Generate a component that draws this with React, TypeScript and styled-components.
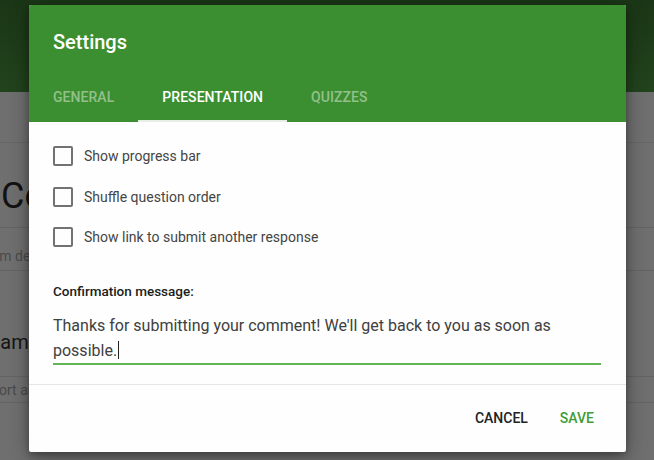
import React from "react";
import styled, { createGlobalStyle } from "styled-components";

const GlobalStyle = createGlobalStyle`
  html, body {
    margin: 0;
    padding: 0;
    width: 654px;
    height: 460px;
    overflow: hidden;
    font-family: Roboto, "Liberation Sans", Arial, sans-serif;
  }
`;

const Page = styled.div`
  position: relative;
  width: 654px;
  height: 460px;
  background: #6f6f6f;
  overflow: hidden;
`;

const TopBand = styled.div`
  height: 92px;
  background: linear-gradient(180deg, #1b3616 0%, #22431d 100%);
`;

const FormColumn = styled.div`
  margin-top: 50px;
  display: flex;
  flex-direction: column;
  border-top: 1px solid #666;
`;

const FormRow = styled.div<{ $h: number; $line?: boolean }>`
  height: ${(p) => p.$h}px;
  display: flex;
  align-items: center;
  border-bottom: ${(p) => (p.$line ? "1px solid #646464" : "none")};
  white-space: nowrap;
`;

const FormTitle = styled.span`
  font-size: 36px;
  color: #121212;
  margin: 22px 0 0 1px;
`;

const FormHint = styled.span<{ $shift: number; $top?: number }>`
  font-size: 14px;
  color: #4a4a4a;
  margin-left: ${(p) => p.$shift}px;
  margin-top: ${(p) => p.$top ?? 0}px;
`;

const QuestionTitle = styled.span`
  font-size: 20px;
  color: #141414;
  margin: 36px 0 0 -14px;
`;

/* dialog */

const Dialog = styled.div`
  position: absolute;
  left: 29px;
  top: 5px;
  width: 597px;
  height: 447px;
  background: #fdfefd;
  border-radius: 2px;
  box-shadow: 0 6px 20px rgba(0, 0, 0, 0.35), 0 2px 6px rgba(0, 0, 0, 0.25);
  display: flex;
  flex-direction: column;
  overflow: hidden;
`;

const Header = styled.div`
  background: #3c8f30;
  height: 117px;
  display: flex;
  flex-direction: column;
`;

const Title = styled.h2`
  margin: 0;
  padding: 25px 24px 0;
  font-size: 20px;
  font-weight: 500;
  color: #ffffff;
`;

const Tabs = styled.div`
  display: flex;
  height: 39px;
  margin-top: auto;
`;

const Tab = styled.div<{ $active?: boolean }>`
  padding: 0 24px 9px;
  display: flex;
  align-items: center;
  font-size: 14px;
  font-weight: 500;
  letter-spacing: 0.05px;
  color: ${(p) => (p.$active ? "#ffffff" : "rgba(255,255,255,0.45)")};
  border-bottom: 2px solid ${(p) => (p.$active ? "#e6efe3" : "transparent")};
  box-sizing: border-box;
`;

const Body = styled.div`
  padding: 14px 24px 0;
  display: flex;
  flex-direction: column;
  flex: 1;
`;

const CheckRow = styled.label`
  display: flex;
  align-items: center;
  gap: 11px;
  height: 40.5px;
  font-size: 14px;
  color: #454545;
`;

const Box = styled.span`
  width: 16px;
  height: 16px;
  border: 2px solid #727272;
  border-radius: 2px;
`;

const FieldLabel = styled.div`
  margin-top: 25px;
  font-size: 13.5px;
  font-weight: 500;
  color: #1c1c1c;
`;

const MessageField = styled.div`
  margin-top: 14px;
  margin-right: 1px;
  font-size: 16px;
  line-height: 25px;
  color: #404040;
  border-bottom: 2px solid #5fb653;
`;

const Caret = styled.span`
  display: inline-block;
  width: 1px;
  height: 18px;
  background: #222;
  vertical-align: -3px;
  margin-left: 1px;
`;

const Footer = styled.div`
  border-top: 1px solid #e6e6e6;
  height: 68px;
  display: flex;
  justify-content: flex-end;
  align-items: center;
  padding: 0 16px 2px;
  box-sizing: border-box;
`;

const FlatButton = styled.button<{ $primary?: boolean }>`
  border: none;
  background: none;
  padding: 8px 16px;
  font-family: inherit;
  font-size: 14px;
  font-weight: 500;
  color: ${(p) => (p.$primary ? "#3f9d35" : "#222222")};
  cursor: pointer;
`;

const options = [
  "Show progress bar",
  "Shuffle question order",
  "Show link to submit another response",
];

export default function App() {
  return (
    <>
      <GlobalStyle />
      <Page>
        <TopBand />
        <FormColumn>
          <FormRow $h={84} $line>
            <FormTitle>Comment form</FormTitle>
          </FormRow>
          <FormRow $h={42} $line>
            <FormHint $shift={-21} $top={14}>Form description</FormHint>
          </FormRow>
          <FormRow $h={105} $line>
            <QuestionTitle>Name</QuestionTitle>
          </FormRow>
          <FormRow $h={25} $line>
            <FormHint $shift={-17}>Short answer text</FormHint>
          </FormRow>
        </FormColumn>

        <Dialog>
          <Header>
            <Title>Settings</Title>
            <Tabs>
              <Tab>GENERAL</Tab>
              <Tab $active>PRESENTATION</Tab>
              <Tab>QUIZZES</Tab>
            </Tabs>
          </Header>
          <Body>
            {options.map((o) => (
              <CheckRow key={o}>
                <Box />
                {o}
              </CheckRow>
            ))}
            <FieldLabel>Confirmation message:</FieldLabel>
            <MessageField>
              Thanks for submitting your comment! We'll get back to you as soon as possible.
              <Caret />
            </MessageField>
          </Body>
          <Footer>
            <FlatButton>CANCEL</FlatButton>
            <FlatButton $primary>SAVE</FlatButton>
          </Footer>
        </Dialog>
      </Page>
    </>
  );
}
